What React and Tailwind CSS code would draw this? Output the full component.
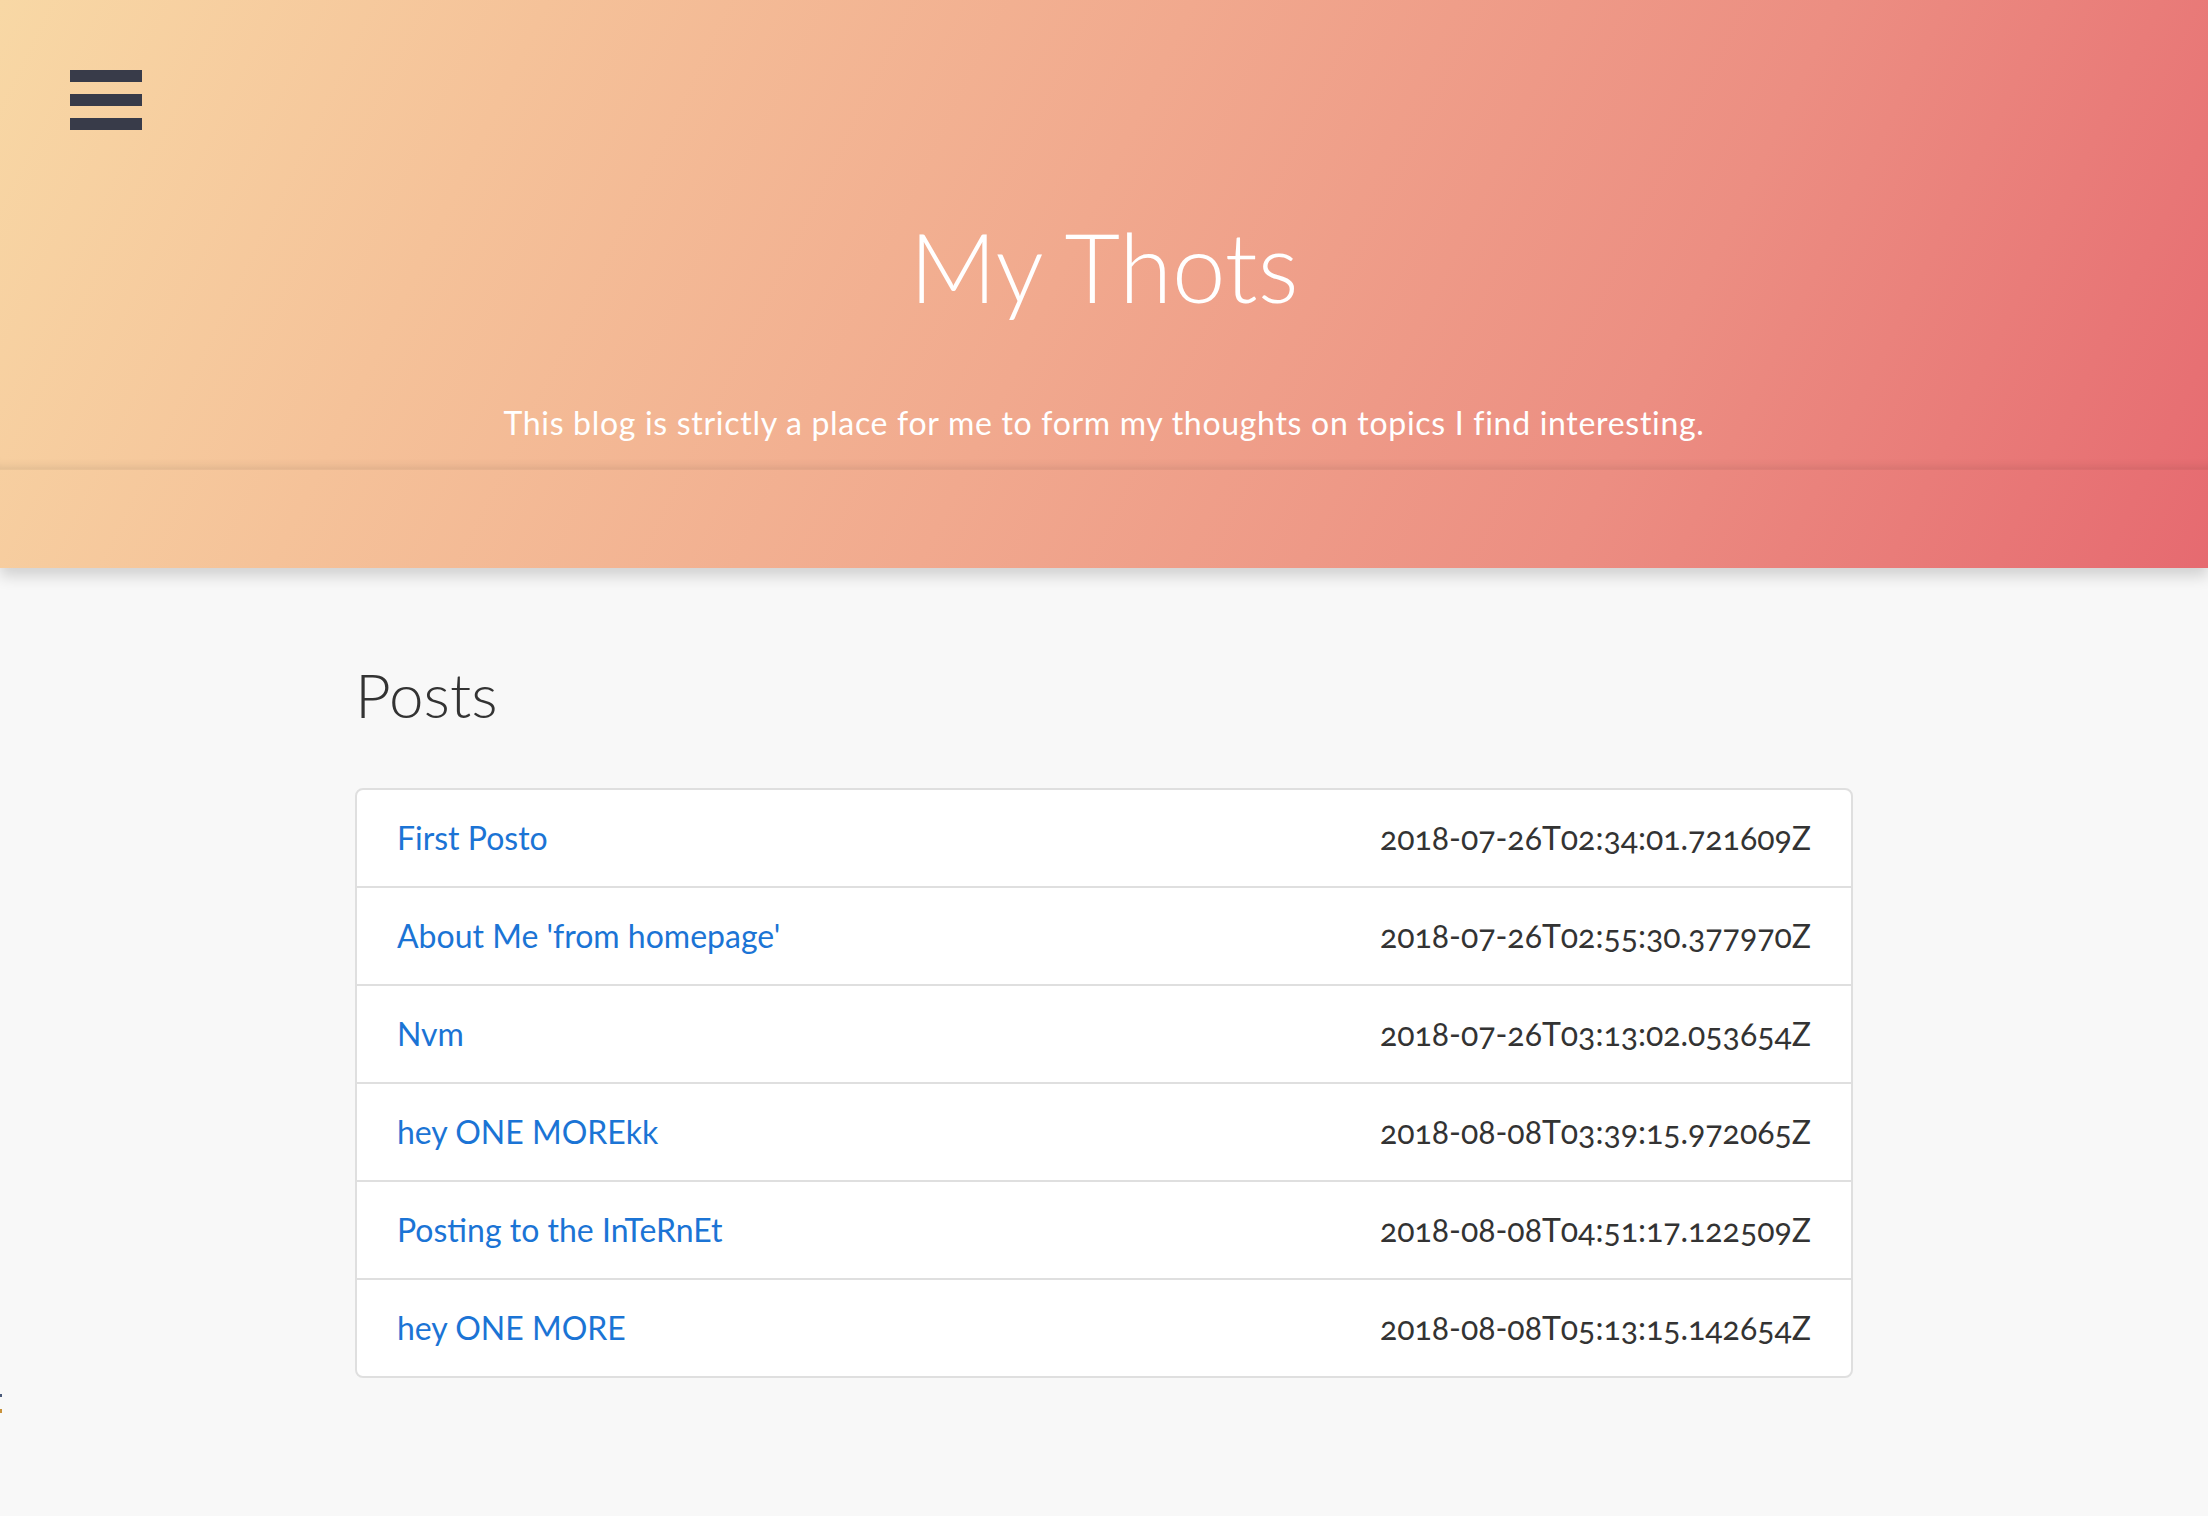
export default function App() {
  const posts = [
    ["First Posto", "2018-07-26T02:34:01.721609Z"],
    ["About Me 'from homepage'", "2018-07-26T02:55:30.377970Z"],
    ["Nvm", "2018-07-26T03:13:02.053654Z"],
    ["hey ONE MOREkk", "2018-08-08T03:39:15.972065Z"],
    ["Posting to the InTeRnEt", "2018-08-08T04:51:17.122509Z"],
    ["hey ONE MORE", "2018-08-08T05:13:15.142654Z"],
  ];
  return (
    <div className="relative min-h-screen overflow-hidden bg-[#f8f8f8] font-['Lato',sans-serif]">
      <header className="relative z-10 bg-[linear-gradient(116deg,#f8d8a5_0%,#f5c299_22%,#f1a98e_48%,#ec8e82_74%,#e66a70_100%)] shadow-[0_8px_14px_rgba(0,0,0,0.16)]">
        <div className="flex h-[470px] flex-col border-b border-[rgba(0,0,0,0.05)] shadow-[inset_0_-10px_10px_-8px_rgba(0,0,0,0.1)]">
          <div className="pl-[70px] pt-[70px]">
            <div className="flex w-[72px] flex-col gap-[12px]">
              <span className="block h-[12px] bg-[#383b49]"></span>
              <span className="block h-[12px] bg-[#383b49]"></span>
              <span className="block h-[12px] bg-[#383b49]"></span>
            </div>
          </div>
          <h1 className="mt-[78px] text-center text-[96px] font-light leading-[1.2] text-white">My Thots</h1>
          <p className="mt-[76px] text-center text-[32px] leading-[1.5] tracking-[0.7px] text-white">
            This blog is strictly a place for me to form my thoughts on topics I find interesting.
          </p>
        </div>
        <div className="h-[98px]"></div>
      </header>

      <main className="mx-auto w-[1498px]">
        <h2 className="mt-[89px] text-[62px] font-light leading-[1.2] text-[#333]">Posts</h2>
        <ul className="mt-[57px] overflow-hidden rounded-lg border-2 border-[#dfdfdf] bg-white">
          {posts.map(([title, date], i) => (
            <li
              key={i}
              className={`box-content flex h-[96px] items-center justify-between px-[40px] text-[32px] leading-[1.5] ${i > 0 ? "border-t-2 border-[#dfdfdf]" : ""}`}
            >
              <a className="text-[#1b74d5]">{title}</a>
              <span className="text-[#333] oldstyle-nums">{date}</span>
            </li>
          ))}
        </ul>
      </main>

      <div className="absolute left-0 top-[1394px] h-[3px] w-[2px] bg-[#4a5a7a]"></div>
      <div className="absolute left-0 top-[1409px] h-[4px] w-[2px] bg-[#c9923a]"></div>
    </div>
  );
}
